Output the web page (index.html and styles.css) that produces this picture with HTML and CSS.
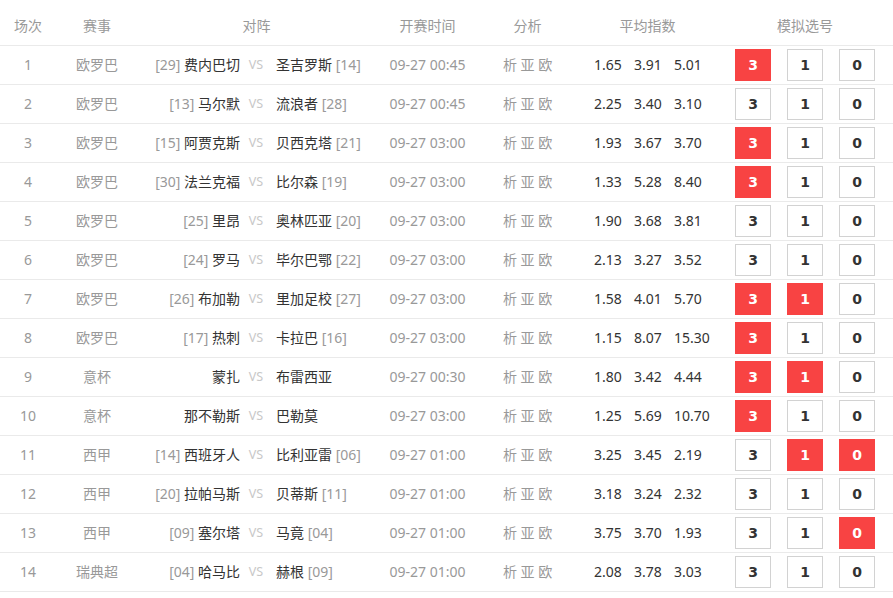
FILE: index.html
```html
<!DOCTYPE html>
<html lang="zh-CN">
<head>
<meta charset="utf-8">
<title>模拟选号</title>
<link rel="stylesheet" href="styles.css">
</head>
<body>
<table class="matches">
  <colgroup>
    <col class="w-no"><col class="w-ev"><col class="w-home"><col class="w-vs"><col class="w-away"><col class="w-time"><col class="w-ana"><col class="w-odds"><col class="w-pick">
  </colgroup>
  <thead>
    <tr>
      <th>场次</th><th>赛事</th><th colspan="3">对阵</th><th>开赛时间</th><th>分析</th><th>平均指数</th><th class="pick-h">模拟选号</th>
    </tr>
  </thead>
  <tbody>
    <tr><td class="no">1</td><td class="ev">欧罗巴</td><td class="home"><span class="rk">[29]</span> 费内巴切</td><td class="vs">VS</td><td class="away">圣吉罗斯 <span class="rk">[14]</span></td><td class="time">09-27 00:45</td><td class="ana">析 亚 欧</td><td class="odds"><span>1.65</span><span>3.91</span><span>5.01</span></td><td><div class="picks"><b class="on">3</b><b>1</b><b>0</b></div></td></tr>
    <tr><td class="no">2</td><td class="ev">欧罗巴</td><td class="home"><span class="rk">[13]</span> 马尔默</td><td class="vs">VS</td><td class="away">流浪者 <span class="rk">[28]</span></td><td class="time">09-27 00:45</td><td class="ana">析 亚 欧</td><td class="odds"><span>2.25</span><span>3.40</span><span>3.10</span></td><td><div class="picks"><b>3</b><b>1</b><b>0</b></div></td></tr>
    <tr><td class="no">3</td><td class="ev">欧罗巴</td><td class="home"><span class="rk">[15]</span> 阿贾克斯</td><td class="vs">VS</td><td class="away">贝西克塔 <span class="rk">[21]</span></td><td class="time">09-27 03:00</td><td class="ana">析 亚 欧</td><td class="odds"><span>1.93</span><span>3.67</span><span>3.70</span></td><td><div class="picks"><b class="on">3</b><b>1</b><b>0</b></div></td></tr>
    <tr><td class="no">4</td><td class="ev">欧罗巴</td><td class="home"><span class="rk">[30]</span> 法兰克福</td><td class="vs">VS</td><td class="away">比尔森 <span class="rk">[19]</span></td><td class="time">09-27 03:00</td><td class="ana">析 亚 欧</td><td class="odds"><span>1.33</span><span>5.28</span><span>8.40</span></td><td><div class="picks"><b class="on">3</b><b>1</b><b>0</b></div></td></tr>
    <tr><td class="no">5</td><td class="ev">欧罗巴</td><td class="home"><span class="rk">[25]</span> 里昂</td><td class="vs">VS</td><td class="away">奥林匹亚 <span class="rk">[20]</span></td><td class="time">09-27 03:00</td><td class="ana">析 亚 欧</td><td class="odds"><span>1.90</span><span>3.68</span><span>3.81</span></td><td><div class="picks"><b>3</b><b>1</b><b>0</b></div></td></tr>
    <tr><td class="no">6</td><td class="ev">欧罗巴</td><td class="home"><span class="rk">[24]</span> 罗马</td><td class="vs">VS</td><td class="away">毕尔巴鄂 <span class="rk">[22]</span></td><td class="time">09-27 03:00</td><td class="ana">析 亚 欧</td><td class="odds"><span>2.13</span><span>3.27</span><span>3.52</span></td><td><div class="picks"><b>3</b><b>1</b><b>0</b></div></td></tr>
    <tr><td class="no">7</td><td class="ev">欧罗巴</td><td class="home"><span class="rk">[26]</span> 布加勒</td><td class="vs">VS</td><td class="away">里加足校 <span class="rk">[27]</span></td><td class="time">09-27 03:00</td><td class="ana">析 亚 欧</td><td class="odds"><span>1.58</span><span>4.01</span><span>5.70</span></td><td><div class="picks"><b class="on">3</b><b class="on">1</b><b>0</b></div></td></tr>
    <tr><td class="no">8</td><td class="ev">欧罗巴</td><td class="home"><span class="rk">[17]</span> 热刺</td><td class="vs">VS</td><td class="away">卡拉巴 <span class="rk">[16]</span></td><td class="time">09-27 03:00</td><td class="ana">析 亚 欧</td><td class="odds"><span>1.15</span><span>8.07</span><span>15.30</span></td><td><div class="picks"><b class="on">3</b><b>1</b><b>0</b></div></td></tr>
    <tr><td class="no">9</td><td class="ev">意杯</td><td class="home">蒙扎</td><td class="vs">VS</td><td class="away">布雷西亚</td><td class="time">09-27 00:30</td><td class="ana">析 亚 欧</td><td class="odds"><span>1.80</span><span>3.42</span><span>4.44</span></td><td><div class="picks"><b class="on">3</b><b class="on">1</b><b>0</b></div></td></tr>
    <tr><td class="no">10</td><td class="ev">意杯</td><td class="home">那不勒斯</td><td class="vs">VS</td><td class="away">巴勒莫</td><td class="time">09-27 03:00</td><td class="ana">析 亚 欧</td><td class="odds"><span>1.25</span><span>5.69</span><span>10.70</span></td><td><div class="picks"><b class="on">3</b><b>1</b><b>0</b></div></td></tr>
    <tr><td class="no">11</td><td class="ev">西甲</td><td class="home"><span class="rk">[14]</span> 西班牙人</td><td class="vs">VS</td><td class="away">比利亚雷 <span class="rk">[06]</span></td><td class="time">09-27 01:00</td><td class="ana">析 亚 欧</td><td class="odds"><span>3.25</span><span>3.45</span><span>2.19</span></td><td><div class="picks"><b>3</b><b class="on">1</b><b class="on">0</b></div></td></tr>
    <tr><td class="no">12</td><td class="ev">西甲</td><td class="home"><span class="rk">[20]</span> 拉帕马斯</td><td class="vs">VS</td><td class="away">贝蒂斯 <span class="rk">[11]</span></td><td class="time">09-27 01:00</td><td class="ana">析 亚 欧</td><td class="odds"><span>3.18</span><span>3.24</span><span>2.32</span></td><td><div class="picks"><b>3</b><b>1</b><b>0</b></div></td></tr>
    <tr><td class="no">13</td><td class="ev">西甲</td><td class="home"><span class="rk">[09]</span> 塞尔塔</td><td class="vs">VS</td><td class="away">马竟 <span class="rk">[04]</span></td><td class="time">09-27 01:00</td><td class="ana">析 亚 欧</td><td class="odds"><span>3.75</span><span>3.70</span><span>1.93</span></td><td><div class="picks"><b>3</b><b>1</b><b class="on">0</b></div></td></tr>
    <tr><td class="no">14</td><td class="ev">瑞典超</td><td class="home"><span class="rk">[04]</span> 哈马比</td><td class="vs">VS</td><td class="away">赫根 <span class="rk">[09]</span></td><td class="time">09-27 01:00</td><td class="ana">析 亚 欧</td><td class="odds"><span>2.08</span><span>3.78</span><span>3.03</span></td><td><div class="picks"><b>3</b><b>1</b><b>0</b></div></td></tr>
  </tbody>
</table>
</body>
</html>
```
FILE: styles.css
```css
html, body {
  margin: 0;
  padding: 0;
  background: #fff;
}
body {
  font-family: "Noto Sans", "Noto Sans CJK SC", sans-serif;
  font-size: 14px;
  color: #333;
}
.matches {
  width: 893px;
  table-layout: fixed;
  border-collapse: collapse;
}
.w-no { width: 56px; }
.w-ev { width: 82px; }
.w-home { width: 106px; }
.w-vs { width: 24px; }
.w-away { width: 107px; }
.w-time { width: 105px; }
.w-ana { width: 95px; }
.w-odds { width: 145px; }
.w-pick { width: 173px; }

.matches th {
  height: 45px;
  padding: 8px 0 0;
  box-sizing: border-box;
  font-weight: normal;
  color: #999;
  text-align: center;
  vertical-align: middle;
  border-bottom: 1px solid #eaeaea;
  line-height: 20px;
}
.matches th.pick-h { padding-right: 3px; }

.matches td {
  height: 38px;
  padding: 0;
  border-bottom: 1px solid #eaeaea;
  text-align: center;
  vertical-align: middle;
  line-height: 20px;
  white-space: nowrap;
}
.matches td.no { color: #999; }
.matches td.ev { color: #999; }
.matches td.home { text-align: right; padding-right: 4px; }
.matches td.vs { font-size: 12.5px; color: #c8c8c8; }
.matches td.away { text-align: left; padding-left: 8px; }
.rk { color: #999; }
.matches td.time { color: #999; }
.matches td.ana { color: #999; }
.matches td.odds { text-align: left; padding-left: 19px; }
.odds span {
  display: inline-block;
  width: 40px;
}
.picks {
  display: flex;
  gap: 16px;
  padding-left: 15px;
}
.picks b {
  box-sizing: border-box;
  width: 36px;
  height: 32px;
  border: 1px solid #d2d2d2;
  background: #fff;
  color: #333;
  font-family: "DejaVu Sans", sans-serif;
  font-weight: bold;
  font-size: 14px;
  line-height: 30px;
  text-align: center;
}
.picks b.on {
  background: #f84343;
  border-color: #f84343;
  color: #fff;
}
```
